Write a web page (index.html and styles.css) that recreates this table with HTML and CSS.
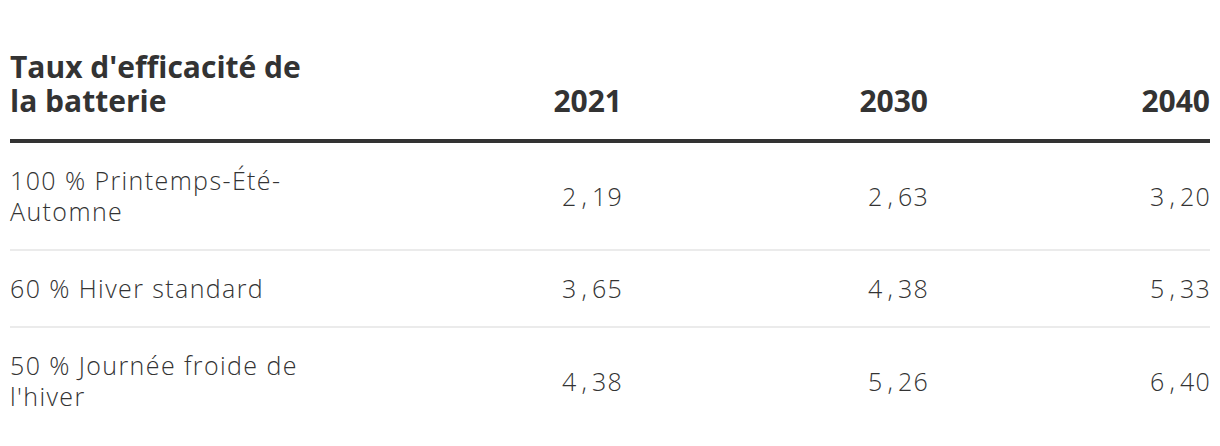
FILE: index.html
```html
<!DOCTYPE html>
<html lang="fr">
<head>
<meta charset="utf-8">
<title>Taux d'efficacité de la batterie</title>
<link rel="stylesheet" href="styles.css">
</head>
<body>
<div class="table">
  <div class="row head">
    <div class="cell label">Taux d'efficacité de la batterie</div>
    <div class="cell num">2021</div>
    <div class="cell num">2030</div>
    <div class="cell num">2040</div>
  </div>
  <div class="row">
    <div class="cell label">100 % Printemps-Été-Automne</div>
    <div class="cell num val">2<span class="c">,</span>19</div>
    <div class="cell num val">2<span class="c">,</span>63</div>
    <div class="cell num val">3<span class="c">,</span>20</div>
  </div>
  <div class="row">
    <div class="cell label">60 % Hiver standard</div>
    <div class="cell num val">3<span class="c">,</span>65</div>
    <div class="cell num val">4<span class="c">,</span>38</div>
    <div class="cell num val">5<span class="c">,</span>33</div>
  </div>
  <div class="row last">
    <div class="cell label">50 % Journée froide de l'hiver</div>
    <div class="cell num val">4<span class="c">,</span>38</div>
    <div class="cell num val">5<span class="c">,</span>26</div>
    <div class="cell num val">6<span class="c">,</span>40</div>
  </div>
</div>
</body>
</html>
```

FILE: styles.css
```css
html, body {
  margin: 0;
  padding: 0;
  background: #ffffff;
}

body {
  color: #333333;
  font-family: "Open Sans", "Noto Sans", sans-serif;
  font-weight: 300;
}

.table {
  padding: 0 10px;
}

.row {
  display: grid;
  grid-template-columns: 312px 300px 306px 282px;
  align-items: center;
  padding: 22px 0;
  border-bottom: 2px solid #ebebeb;
  font-size: 25px;
  line-height: 31px;
}

.row.last {
  border-bottom: none;
}

.row.head {
  align-items: end;
  padding: 50px 0 21px;
  border-bottom: 4px solid #333333;
  font-family: "Open Sans", sans-serif;
  font-weight: 700;
  font-size: 30px;
  line-height: 34px;
}

.label {
  max-width: 300px;
}

.row:not(.head) .label {
  letter-spacing: 1.4px;
}

.num {
  text-align: right;
  font-variant-numeric: tabular-nums;
}

.val {
  letter-spacing: 1.2px;
  margin-right: -1px;
}

.c {
  display: inline-block;
  width: 0.58em;
  text-align: center;
}
```
